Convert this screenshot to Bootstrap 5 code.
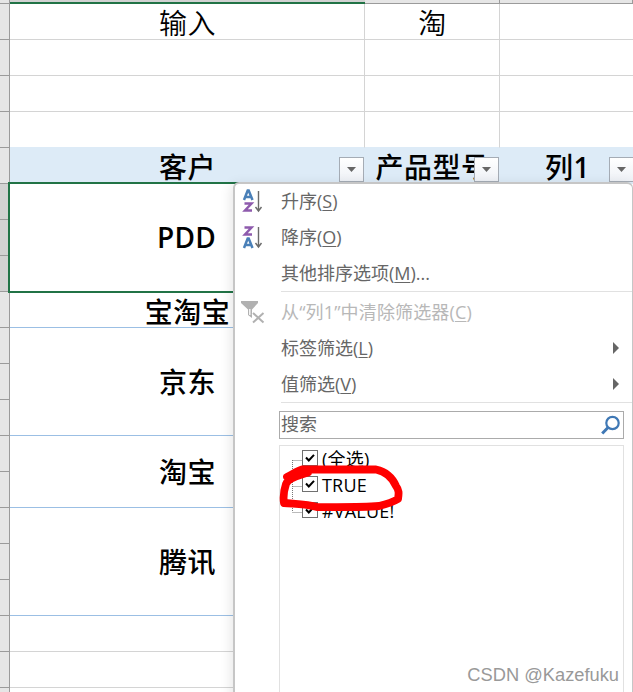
<!DOCTYPE html>
<html lang="zh-CN">
<head>
<meta charset="utf-8">
<meta name="viewport" content="width=device-width, initial-scale=1">
<title>筛选</title>
<link href="https://cdn.jsdelivr.net/npm/bootstrap@5.3.0/dist/css/bootstrap.min.css" rel="stylesheet">
<style>
body{width:633px;height:692px;overflow:hidden;background:#fff;color:#000;font-family:"Open Sans","Noto Sans CJK SC",sans-serif}
.app{width:633px;height:692px}
.gutter{width:10px;border-right:1px solid #9b9b9b;background:#e6e6e6;flex:none}
.gutter div{height:36px;border-bottom:1px solid #9b9b9b}
.gutter div:first-child{height:4px}
.gutter .on{background:#d2d2d2}
.colhead{height:4px;background:#e6e6e6}
.colhead div{border-bottom:1px solid #9b9b9b;border-right:1px solid #9b9b9b}
.colhead .on{background:#d2d2d2;border-bottom:2px solid #217346;border-right:0}
.ca{width:355px;flex:none}.cb{width:135px;flex:none}.cc{width:133px;flex:none}
.line-row{height:36px}
.cell{border-right:1px solid #d4d4d4;border-bottom:1px solid #d4d4d4;font-size:28px;line-height:1;letter-spacing:.5px;white-space:nowrap;font-weight:350;padding:2px 0 0 1px}
.line-row.last .cell{border-bottom-color:#ddebf7}
.cell.cc{border-right:0}
.heads{height:36px;background:#ddebf7;font-size:28px;font-weight:500;line-height:1;letter-spacing:.5px;white-space:nowrap}
.heads .lbl{padding-top:1px}
.drop{width:25px;height:25px;right:1px;top:9px;border:1px solid #a5acb5;background:linear-gradient(#fff,#eef1f6)}
.drop svg{display:block}
.client{font-size:28px;font-weight:500;line-height:1;letter-spacing:.5px;border-bottom:1px solid #9bbfe4}
.latin{font-weight:600}
.h1r{height:36px}.h2r{height:72px}.h3r{height:108px}
.picked{height:111px;margin:-2px 0 -1px -2px;border:2px solid #217346;position:relative;z-index:1}
.picked .latin{padding-bottom:2px;letter-spacing:.2px}
.plain{border-color:#d4d4d4}
.menu-pane{left:233px;top:182px;width:400px;height:520px;background:#fff;border:2px solid #c6c6c6;border-right-width:1px;border-radius:6px 6px 0 0;z-index:5;box-shadow:-2px 2px 12px rgba(0,0,0,.1);font-size:18px;color:#666;font-weight:400}
.entry{height:36px;line-height:36px;white-space:nowrap}
.entry:first-child{margin-top:-1px}
.entry.off{color:#b8b8b8;letter-spacing:.15px}
.ico{width:46px;flex:none;padding-left:6px}
.ico svg{display:block}
.rule{margin:0 0 2px 46px;height:1px;background:#e1e1e1}
.arr{margin-left:auto;margin-right:13px}
.find{margin:8px 8px 0 44px;height:28px;border:1px solid #ababab;line-height:25px;padding-left:1px}
.find span{padding-bottom:1px}
.tree{margin:6px 8px 0 44px;height:260px;border:1px solid #e1e1e1;color:#000;font-weight:400;padding-left:12px}
.leaf{height:26px;line-height:26px;font-size:18px;letter-spacing:.2px}
.twig{width:10px;height:26px;flex:none}
.box{width:16px;height:16px;border:1px solid #707070;background:#fff;flex:none;margin:0 4px 2px 0}
.box svg{display:block}
.ring{left:275px;top:460px;z-index:7}
.sign{right:14px;bottom:4px;z-index:8;font:18.3px/26px "Liberation Sans",sans-serif;color:#999;white-space:nowrap}
u{text-underline-offset:2px;text-decoration-thickness:1px}
</style>
</head>
<body>
<div class="app position-relative d-flex overflow-hidden">
  <div class="gutter"><div></div><div></div><div></div><div></div><div></div><div></div><div class="on"></div><div class="on"></div><div class="on"></div><div></div><div></div><div></div><div></div><div></div><div></div><div></div><div></div><div></div><div></div><div></div><div></div></div>
  <div class="flex-grow-1">
    <div class="colhead d-flex"><div class="ca on"></div><div class="cb"></div><div class="cc"></div></div>
    <div class="line-row d-flex"><div class="cell ca d-flex align-items-center justify-content-center">输入</div><div class="cell cb d-flex align-items-center justify-content-center">淘</div><div class="cell cc"></div></div>
    <div class="line-row d-flex"><div class="cell ca"></div><div class="cell cb"></div><div class="cell cc"></div></div>
    <div class="line-row d-flex"><div class="cell ca"></div><div class="cell cb"></div><div class="cell cc"></div></div>
    <div class="line-row last d-flex"><div class="cell ca"></div><div class="cell cb"></div><div class="cell cc"></div></div>
    <div class="heads d-flex">
      <div class="ca position-relative d-flex align-items-center justify-content-center"><span class="lbl">客户</span><span class="drop position-absolute"><svg width="23" height="23"><path d="M7 9h9l-4.500 5z" fill="#666"/></svg></span></div>
      <div class="cb position-relative d-flex align-items-center justify-content-center"><span class="lbl">产品型号</span><span class="drop position-absolute"><svg width="23" height="23"><path d="M7 9h9l-4.500 5z" fill="#666"/></svg></span></div>
      <div class="cb position-relative d-flex align-items-center justify-content-center"><span class="lbl">列<span class="latin">1</span></span><span class="drop position-absolute"><svg width="23" height="23"><path d="M7 9h9l-4.500 5z" fill="#666"/></svg></span></div>
    </div>
    <div class="ca">
      <div class="client picked d-flex align-items-center justify-content-center"><span class="latin">PDD</span></div>
      <div class="client h1r d-flex align-items-center justify-content-center pt-1">宝淘宝</div>
      <div class="client h3r d-flex align-items-center justify-content-center">京东</div>
      <div class="client h2r d-flex align-items-center justify-content-center">淘宝</div>
      <div class="client h3r d-flex align-items-center justify-content-center">腾讯</div>
      <div class="client plain h1r"></div>
      <div class="client plain h1r"></div>
    </div>
  </div>

  <div class="menu-pane position-absolute">
    <div class="entry d-flex align-items-center"><span class="ico"><svg width="24" height="26" viewBox="0 0 24 26" fill="none" stroke-width="2.500"><path d="M3 12 6.700 2.500h1L11.500 12M4.500 9h5.500" stroke="#4a80b8"/><path d="M3.500 15.500h7L4 22.500h7" stroke="#8e5bad"/><path d="M17.500 3v20M14.500 19l3 4 3-4" stroke="#6a6a6a" stroke-width="1.400"/></svg></span><span>升序(<u>S</u>)</span></div>
    <div class="entry d-flex align-items-center"><span class="ico"><svg width="24" height="26" viewBox="0 0 24 26" fill="none" stroke-width="2.500"><path d="M3.500 3.500h7L4 10.500h7" stroke="#8e5bad"/><path d="M3 24 6.700 14.500h1L11.500 24M4.500 21h5.500" stroke="#4a80b8"/><path d="M17.500 3v20M14.500 19l3 4 3-4" stroke="#6a6a6a" stroke-width="1.400"/></svg></span><span>降序(<u>O</u>)</span></div>
    <div class="entry d-flex align-items-center"><span class="ico"></span><span>其他排序选项(<u>M</u>)...</span></div>
    <div class="rule"></div>
    <div class="entry off d-flex align-items-center"><span class="ico"><svg width="26" height="26" viewBox="0 0 26 26"><path d="M0 2h17v2l-6 6.500V19l-4-3v-5.500L0 4z" fill="#b1b1b1"/><path d="M8.800 10v6" stroke="#fff" stroke-width="1.300"/><path d="M12 14l10.500 9.500M22.500 14 12 23.500" stroke="#fff" stroke-width="4"/><path d="M12 14l10.500 9.500M22.500 14 12 23.500" stroke="#b1b1b1" stroke-width="2"/></svg></span><span>从“列1”中清除筛选器(<u>C</u>)</span></div>
    <div class="entry d-flex align-items-center"><span class="ico"></span><span>标签筛选(<u>L</u>)</span><svg class="arr" width="6" height="12"><path d="M0 0l6 6-6 6z" fill="#666"/></svg></div>
    <div class="entry d-flex align-items-center"><span class="ico"></span><span>值筛选(<u>V</u>)</span><svg class="arr" width="6" height="12"><path d="M0 0l6 6-6 6z" fill="#666"/></svg></div>
    <div class="rule"></div>
    <div class="find d-flex align-items-center justify-content-between"><span>搜索</span><svg width="22" height="24" viewBox="0 0 22 24" fill="none" stroke="#3f78b5"><circle cx="11.500" cy="10" r="6.200" stroke-width="2.200"/><path d="M7 14.500 1.200 20.500" stroke-width="3"/></svg></div>
    <div class="tree">
      <div class="leaf d-flex align-items-center"><svg class="twig"><path d="M.5 14v12M.5 14.500h9" stroke="#777" fill="none" stroke-dasharray="1 1"/></svg><span class="box"><svg width="14" height="14"><path d="M3 6.500l2.800 3L11 3.800" fill="none" stroke="#000" stroke-width="2"/></svg></span><span>(全选)</span></div>
      <div class="leaf d-flex align-items-center"><svg class="twig"><path d="M.5 0v26M.5 14.500h9" stroke="#777" fill="none" stroke-dasharray="1 1"/></svg><span class="box"><svg width="14" height="14"><path d="M3 6.500l2.800 3L11 3.800" fill="none" stroke="#000" stroke-width="2"/></svg></span><span>TRUE</span></div>
      <div class="leaf d-flex align-items-center"><svg class="twig"><path d="M.5 0v14M.5 14.500h9" stroke="#777" fill="none" stroke-dasharray="1 1"/></svg><span class="box"><svg width="14" height="14"><path d="M3 6.500l2.800 3L11 3.800" fill="none" stroke="#000" stroke-width="2"/></svg></span><span>#VALUE!</span></div>
    </div>
  </div>
  <svg class="ring position-absolute" width="135" height="55" viewBox="0 0 135 55" fill="none" stroke="#f00" stroke-width="7.800" stroke-linecap="round" stroke-linejoin="round"><path d="M12 17C18 14 22 11 27 9.500C45 9.500 75 9.500 101 9.500C112 12 118 19 121 26C124 30 124 33 123 39C118 42 112 44 104 46C85 47.500 60 47 42 47C32 44 18 44 9 43C8 37 9 30 11 24C13 18 22 16 33 12.500"/></svg>
  <div class="sign position-absolute">CSDN @Kazefuku</div>
</div>
<script src="https://cdn.jsdelivr.net/npm/bootstrap@5.3.0/dist/js/bootstrap.bundle.min.js"></script>
</body>
</html>
